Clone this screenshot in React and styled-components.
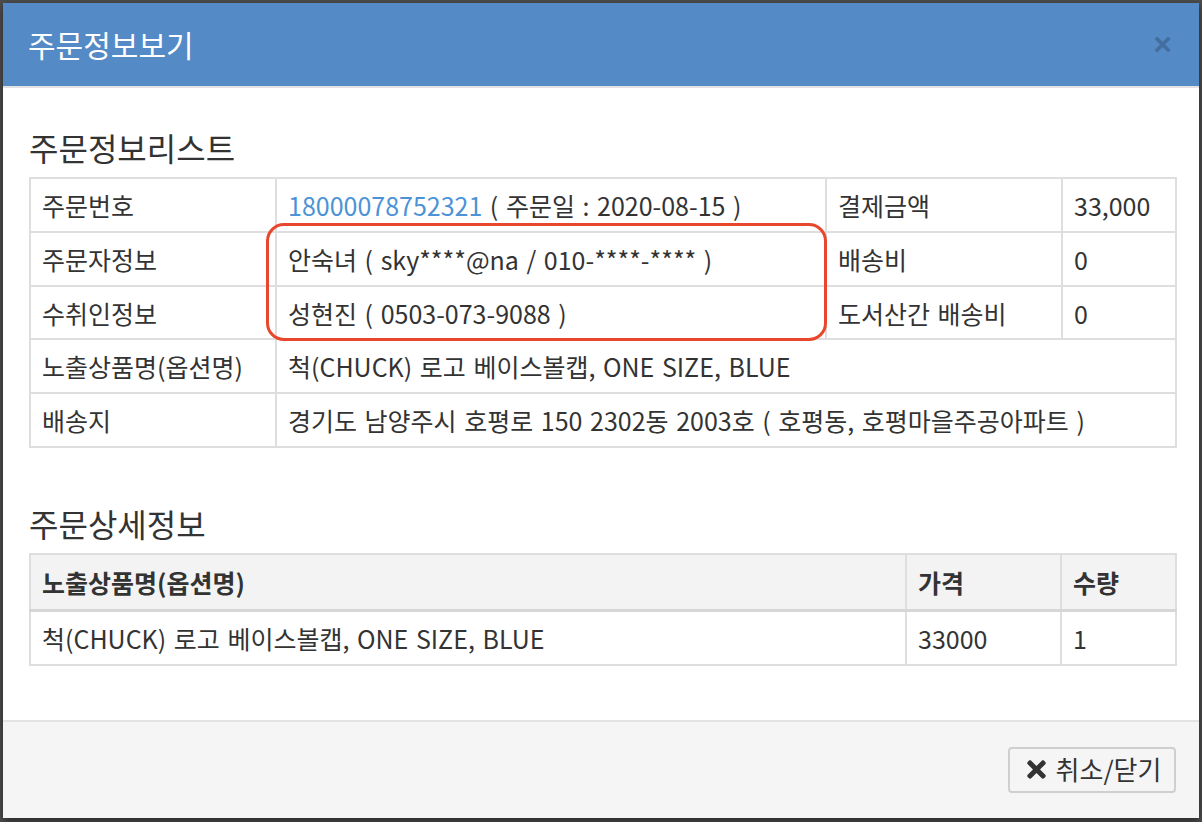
import React from "react";
import styled, { createGlobalStyle } from "styled-components";
import { FaTimes } from "react-icons/fa";

const Global = createGlobalStyle`
  html, body { margin: 0; padding: 0; }
  body {
    font-family: "Noto Sans CJK KR", "Noto Sans", sans-serif;
    background: #4f4f4f;
  }
  * { box-sizing: border-box; }
`;

const Backdrop = styled.div`
  width: 1202px;
  height: 822px;
  background: #4d4d4d;
  padding: 3px 3px 4px 3px;
  overflow: hidden;
`;

const Modal = styled.div`
  width: 1196px;
  height: 815px;
  background: #fff;
  display: flex;
  flex-direction: column;
  box-shadow: 0 3px 8px rgba(0, 0, 0, 0.5);
`;

const Header = styled.div`
  height: 85px;
  background: #548ac6;
  border-bottom: 2px solid #e3e3e3;
  display: flex;
  align-items: center;
  justify-content: space-between;
  padding: 0 27px 2px 25px;
  flex-shrink: 0;
`;

const Title = styled.h4`
  margin: 0;
  font-family: "Noto Sans CJK KR", sans-serif;
  font-weight: 400;
  font-size: 30px;
  color: #fff;
  line-height: 1.2;
`;

const Close = styled.button`
  border: 0;
  background: none;
  padding: 0;
  font-family: "Liberation Sans", sans-serif;
  font-weight: 700;
  font-size: 32px;
  line-height: 1;
  color: #000;
  opacity: 0.2;
  cursor: pointer;
`;

const Body = styled.div`
  flex: 1;
  padding: 41px 24px 0 26px;
`;

const SectionTitle = styled.h3`
  margin: ${(p) => (p.$first ? "0" : "57px")} 0 12px;
  height: 36px;
  font-family: "Noto Sans CJK KR", sans-serif;
  font-weight: 400;
  font-size: 32px;
  line-height: 36px;
  color: #333;
`;

const TableWrap = styled.div`
  position: relative;
`;

const Table = styled.table`
  width: 1146px;
  border-collapse: collapse;
  table-layout: fixed;
  font-family: "Noto Sans CJK KR", sans-serif;
  font-size: 25px;
  word-spacing: 2px;
  color: #333;
`;

const Cell = styled.td`
  border: 2px solid #dedede;
  height: ${(p) => p.$h || 54}px;
  padding: 0 11px;
  vertical-align: middle;
  white-space: nowrap;
  line-height: 1.2;
`;

const HeadCell = styled.th`
  border: 2px solid #dedede;
  border-bottom: 3px solid #d6d6d6;
  background: #f3f3f3;
  height: 56px;
  padding: 0 11px;
  text-align: left;
  vertical-align: middle;
  font-weight: 700;
  line-height: 1.2;
  word-spacing: 0;
`;

const OrderLink = styled.a`
  color: #4b93d6;
  text-decoration: none;
`;

const Highlight = styled.div`
  position: absolute;
  left: 237px;
  top: 46px;
  width: 561px;
  height: 118px;
  border: 3px solid #e8472d;
  border-radius: 18px;
  pointer-events: none;
`;

const Footer = styled.div`
  height: 98px;
  flex-shrink: 0;
  background: #f5f5f5;
  border-top: 2px solid #e3e3e3;
  display: flex;
  align-items: center;
  justify-content: flex-end;
  padding: 0 23px 0 0;
`;

const Button = styled.button`
  width: 168px;
  height: 46px;
  border: 2px solid #cfcfcf;
  border-radius: 4px;
  background: #f5f5f5;
  color: #333;
  font-family: "Noto Sans CJK KR", sans-serif;
  font-size: 26px;
  line-height: 1;
  display: flex;
  align-items: center;
  justify-content: center;
  gap: 6px;
  padding: 0 0 2px 0;
  cursor: pointer;
  svg { width: 27px; height: 27px; color: #333; }
`;

export default function App() {
  return (
    <>
      <Global />
      <Backdrop>
        <Modal>
          <Header>
            <Title>주문정보보기</Title>
            <Close>×</Close>
          </Header>
          <Body>
            <SectionTitle $first>주문정보리스트</SectionTitle>
            <TableWrap>
              <Table>
                <colgroup>
                  <col style={{ width: 246 }} />
                  <col style={{ width: 550 }} />
                  <col style={{ width: 236 }} />
                  <col style={{ width: 114 }} />
                </colgroup>
                <tbody>
                  <tr>
                    <Cell>주문번호</Cell>
                    <Cell>
                      <OrderLink href="#">18000078752321</OrderLink> ( 주문일 : 2020-08-15 )
                    </Cell>
                    <Cell>결제금액</Cell>
                    <Cell>33,000</Cell>
                  </tr>
                  <tr>
                    <Cell>주문자정보</Cell>
                    <Cell>안숙녀 ( sky****@na / 010-****-**** )</Cell>
                    <Cell>배송비</Cell>
                    <Cell>0</Cell>
                  </tr>
                  <tr>
                    <Cell $h={53}>수취인정보</Cell>
                    <Cell $h={53}>성현진 ( 0503-073-9088 )</Cell>
                    <Cell $h={53}>도서산간 배송비</Cell>
                    <Cell $h={53}>0</Cell>
                  </tr>
                  <tr>
                    <Cell>노출상품명(옵션명)</Cell>
                    <Cell colSpan={3}>척(CHUCK) 로고 베이스볼캡, ONE SIZE, BLUE</Cell>
                  </tr>
                  <tr>
                    <Cell>배송지</Cell>
                    <Cell colSpan={3}>
                      경기도 남양주시 호평로 150 2302동 2003호 ( 호평동, 호평마을주공아파트 )
                    </Cell>
                  </tr>
                </tbody>
              </Table>
              <Highlight />
            </TableWrap>

            <SectionTitle>주문상세정보</SectionTitle>
            <Table>
              <colgroup>
                <col style={{ width: 876 }} />
                <col style={{ width: 155 }} />
                <col style={{ width: 115 }} />
              </colgroup>
              <thead>
                <tr>
                  <HeadCell>노출상품명(옵션명)</HeadCell>
                  <HeadCell>가격</HeadCell>
                  <HeadCell>수량</HeadCell>
                </tr>
              </thead>
              <tbody>
                <tr>
                  <Cell $h={55}>척(CHUCK) 로고 베이스볼캡, ONE SIZE, BLUE</Cell>
                  <Cell $h={55}>33000</Cell>
                  <Cell $h={55}>1</Cell>
                </tr>
              </tbody>
            </Table>
          </Body>
          <Footer>
            <Button>
              <FaTimes />
              취소/닫기
            </Button>
          </Footer>
        </Modal>
      </Backdrop>
    </>
  );
}
